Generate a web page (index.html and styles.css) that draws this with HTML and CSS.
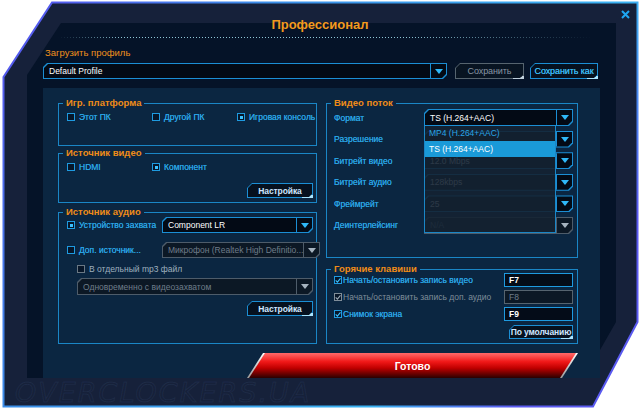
FILE: index.html
```html
<!DOCTYPE html>
<html lang="ru">
<head>
<meta charset="utf-8">
<title>Профессионал</title>
<link rel="stylesheet" href="styles.css">
</head>
<body>
<div class="window">
  <svg class="frame" width="640" height="409" viewBox="0 0 640 409">
    <defs>
      <linearGradient id="edge" gradientUnits="userSpaceOnUse" x1="0" y1="0" x2="640" y2="409">
        <stop offset="0" stop-color="#5a4ff0"/>
        <stop offset="0.3" stop-color="#3a8ee8"/>
        <stop offset="0.7" stop-color="#3ab2f2"/>
        <stop offset="0.86" stop-color="#5a5af0"/>
      </linearGradient>
    </defs>
    <polygon points="52,2.5 637.5,2.5 637.5,322 593,406.5 3.5,406.5 3.5,77" fill="#16213a" stroke="url(#edge)" stroke-width="2"/>
    <polygon points="61,23 616,23 616,322 584,378 27,378 27,75" fill="#051328"/>
  </svg>
  <svg class="close" width="9" height="9" viewBox="0 0 9 9"><path d="M1 1L8 8M8 1L1 8" stroke="#1ea6f2" stroke-width="2"/></svg>

  <header class="titlebar">
    <h1 class="title">Профессионал</h1>
    <div class="dots"></div>
  </header>

  <main class="content">
    <div class="profile-label">Загрузить профиль</div>
    <div class="profile-row">
      <div class="sel cut profile-sel"><div class="sel-in cut"><span class="val">Default Profile</span><span class="arr"></span></div></div>
      <button class="btn gray save"><span class="btn-in">Сохранить</span></button>
      <button class="btn cyan saveas"><span class="btn-in">Сохранить как</span></button>
    </div>

    <section class="panel">
      <div class="cols">
        <div class="col left">
          <fieldset class="group g1">
            <legend>Игр. платформа</legend>
            <div class="opts">
              <label class="opt"><span class="cb"></span>Этот ПК</label>
              <label class="opt"><span class="cb"></span>Другой ПК</label>
              <label class="opt"><span class="cb dot"></span>Игровая консоль</label>
            </div>
          </fieldset>

          <fieldset class="group g2">
            <legend>Источник видео</legend>
            <div class="opts">
              <label class="opt"><span class="cb"></span>HDMI</label>
              <label class="opt"><span class="cb dot"></span>Компонент</label>
            </div>
            <div class="btn-line"><button class="btn light setup"><span class="btn-in">Настройка</span></button></div>
          </fieldset>

          <fieldset class="group g3">
            <legend>Источник аудио</legend>
            <div class="arow">
              <label class="opt"><span class="cb dot"></span>Устройство захвата</label>
              <div class="sel cut"><div class="sel-in cut"><span class="val">Component LR</span><span class="arr"></span></div></div>
            </div>
            <div class="arow second">
              <label class="opt"><span class="cb"></span>Доп. источник...</label>
              <div class="sel cut dis"><div class="sel-in cut"><span class="val">Микрофон (Realtek High Definitio...</span><span class="arr"></span></div></div>
            </div>
            <label class="opt mp3"><span class="cb gray"></span>В отдельный mp3 файл</label>
            <div class="sel cut dis mode"><div class="sel-in cut"><span class="val">Одновременно с видеозахватом</span><span class="arr"></span></div></div>
            <div class="btn-line audio-btn"><button class="btn light setup"><span class="btn-in">Настройка</span></button></div>
          </fieldset>
        </div>

        <div class="col right">
          <fieldset class="group v1">
            <legend>Видео поток</legend>
            <div class="vrows">
              <div class="vrow">
                <span class="lbl">Формат</span>
                <div class="sel-wrap">
                  <div class="sel cut"><div class="sel-in cut"><span class="val">TS (H.264+AAC)</span><span class="arr"></span></div></div>
                  <ul class="menu">
                    <li class="item">MP4 (H.264+AAC)</li>
                    <li class="item on">TS (H.264+AAC)</li>
                  </ul>
                </div>
              </div>
              <div class="vrow"><span class="lbl">Разрешение</span><div class="sel cut"><div class="sel-in cut"><span class="val"></span><span class="arr"></span></div></div></div>
              <div class="vrow"><span class="lbl">Битрейт видео</span><div class="sel cut"><div class="sel-in cut"><span class="val">12.0 Mbps</span><span class="arr"></span></div></div></div>
              <div class="vrow"><span class="lbl">Битрейт аудио</span><div class="sel cut"><div class="sel-in cut"><span class="val">128kbps</span><span class="arr"></span></div></div></div>
              <div class="vrow"><span class="lbl">Фреймрейт</span><div class="sel cut"><div class="sel-in cut"><span class="val">25</span><span class="arr"></span></div></div></div>
              <div class="vrow"><span class="lbl">Деинтерлейсинг</span><div class="sel cut dis"><div class="sel-in cut"><span class="val">N/A</span><span class="arr"></span></div></div></div>
            </div>
          </fieldset>

          <fieldset class="group v2">
            <legend>Горячие клавиши</legend>
            <div class="hk">
              <label class="opt"><span class="cb tick"><svg width="7" height="7" viewBox="0 0 7 7"><path d="M0.8 3.4L2.8 5.4L6.4 1" fill="none" stroke="#3cc0ff" stroke-width="1.3"/></svg></span>Начать/остановить запись видео</label>
              <span class="key">F7</span>
            </div>
            <div class="hk">
              <label class="opt gray"><span class="cb tick gray"><svg width="7" height="7" viewBox="0 0 7 7"><path d="M0.8 3.4L2.8 5.4L6.4 1" fill="none" stroke="#9aa8b4" stroke-width="1.3"/></svg></span>Начать/остановить запись доп. аудио</label>
              <span class="key off">F8</span>
            </div>
            <div class="hk">
              <label class="opt"><span class="cb tick"><svg width="7" height="7" viewBox="0 0 7 7"><path d="M0.8 3.4L2.8 5.4L6.4 1" fill="none" stroke="#3cc0ff" stroke-width="1.3"/></svg></span>Снимок экрана</label>
              <span class="key">F9</span>
            </div>
            <div class="btn-line hk-btn"><button class="btn light defaults"><span class="btn-in">По умолчанию</span></button></div>
          </fieldset>
        </div>
      </div>

      <div class="footer">
        <div class="done-wrap"><button class="done">Готово</button></div>
      </div>
    </section>
  </main>

  <div class="watermark">OVERCLOCKERS.UA</div>
</div>
</body>
</html>
```

FILE: styles.css
```css
* { box-sizing: border-box; margin: 0; padding: 0; }
html, body { width: 640px; height: 409px; overflow: hidden; background: #ffffff; }
body { font-family: "Liberation Sans", Arial, sans-serif; font-size: 8.5px; color: #2aa4e4; }
button { font-family: inherit; border: 0; background: none; cursor: default; }
ul { list-style: none; }

.window { position: relative; width: 640px; height: 409px; }
.frame { position: absolute; left: 0; top: 0; z-index: 0; }
.close { position: absolute; left: 621px; top: 10px; z-index: 2; }
.titlebar, .content, .watermark { position: relative; z-index: 1; }

.titlebar { height: 38px; padding-top: 17px; }
.title { font-size: 13px; line-height: 15px; font-weight: 700; color: #f39a1e; text-align: center; }
.dots {
  margin: 5px 0 0 58px; width: 535px; height: 1px;
  background: repeating-linear-gradient(90deg, #8fc6d6 0 1px, transparent 1px 3px);
  -webkit-mask-image: linear-gradient(90deg, transparent, #000 12%, #000 65%, transparent);
}

.content { margin-left: 43px; width: 557px; }
.profile-label { margin-top: 9px; height: 12px; line-height: 12px; padding-left: 2px; font-size: 9.5px; color: #f0901c; }
.profile-row { margin-top: 4px; height: 16px; display: flex; }

/* bevelled shapes */
.cut { clip-path: polygon(4px 0, 100% 0, 100% calc(100% - 4px), calc(100% - 4px) 100%, 0 100%, 0 4px); }

.sel { height: 16px; padding: 1px; background: #1b8ed4; }
.sel-in { height: 100%; display: flex; align-items: center; background: #030a15; }
.sel .val { flex: 1; padding-left: 5px; color: #ffffff; white-space: nowrap; overflow: hidden; }
.sel .arr { width: 16px; height: 100%; border-left: 1px solid #1b8ed4; display: flex; align-items: center; justify-content: center; }
.sel .arr::before { content: ""; border-left: 4px solid transparent; border-right: 4px solid transparent; border-top: 5px solid #2fb8f8; }
.sel.dis { background: #4e5c6a; }
.sel.dis .sel-in { background: #0c1825; }
.sel.dis .val { color: #6f7d8a; }
.sel.dis .arr { border-left-color: #4e5c6a; }
.sel.dis .arr::before { border-top-color: #a6b3bf; }

.profile-sel { width: 404px; margin-right: 8px; }

.btn {
  display: block; height: 16px; padding: 1px;
  background: linear-gradient(to top left, #a8e4ff 3px, #1b8ed4 3px);
  clip-path: polygon(5px 0, 100% 0, 100% 100%, 0 100%, 0 5px);
}
.btn-in {
  display: flex; align-items: center; justify-content: center; height: 100%;
  background: #06111f; color: #3ab8f2; font-size: 8.5px; font-weight: 700; white-space: nowrap; letter-spacing: -0.1px;
  clip-path: polygon(4px 0, 100% 0, 100% calc(100% - 3px), calc(100% - 3px) 100%, 0 100%, 0 4px);
}
.btn.gray { background: linear-gradient(to top left, #c0d0dc 3px, #56646f 3px); }
.btn.gray .btn-in { color: #8795a2; background: #081422; font-weight: 400; font-size: 9px; }
.btn.cyan .btn-in { font-weight: 400; font-size: 9px; text-shadow: 0 0 0.6px #3ab8f2; }
.btn.light .btn-in { color: #cfe6ff; background: #06111f; }
.save { width: 69px; margin-right: 6px; }
.saveas { width: 68px; }

/* panel */
.panel { margin-top: 9px; height: 290px; background: #0b2641; padding: 10px 22px 0 15px; }
.cols { display: flex; gap: 9px; }
.col { display: flex; flex-direction: column; }
.col.left { width: 259px; }
.col.right { width: 252px; }

.group { border: 1px solid #1a86c6; min-width: 0; padding: 0 3px 0 8px; }
.group legend { margin-left: -4px; padding: 0 3px; font-size: 9.5px; line-height: 10px; font-weight: 700; color: #f08c18; }
.g1 { height: 48px; }
.g2 { height: 55px; margin-top: 2px; }
.g3 { height: 137px; margin-top: 4px; }
.v1 { height: 160px; padding: 0 4px 0 7px; }
.v1 legend, .v2 legend { margin-left: -3px; }
.v2 { height: 80px; margin-top: 6px; padding: 0 4px 0 7px; }

.opts { display: flex; padding-top: 3px; height: 15px; }
.opt { display: flex; align-items: center; height: 12px; white-space: nowrap; text-shadow: 0 0 0.6px #2aa4e4; }
.opts .opt { width: 85px; flex: none; }
.opts .opt:last-child { width: auto; }
.cb { width: 8px; height: 8px; border: 1px solid #1e9ae0; background: #071629; margin-right: 4px; flex: none; display: flex; align-items: center; justify-content: center; }
.cb.dot::after { content: ""; width: 3px; height: 3px; background: #3cc0ff; }
.cb.gray { border-color: #6a7884; }
.opt.gray { color: #7f8d99; text-shadow: none; }
.cb.tick { margin-right: 1px; background: #071629; }
.cb.tick.gray { border-color: #7f8d99; }

.btn-line { display: flex; justify-content: flex-end; }
.g2 .btn-line { margin-top: 10px; }
.setup { width: 66px; height: 15px; }

.arow { display: grid; grid-template-columns: 95px 1fr; align-items: center; height: 16px; }
.arow.second { margin-top: 9px; }
.mp3 { margin: 5px 0 0 10px; color: #9fb0be; text-shadow: none; }
.mode { margin: 3px 0 0 10px; height: 17px; }
.audio-btn { margin-top: 6px; }

.vrows { display: flex; flex-direction: column; gap: 4.6px; padding-top: 1px; }
.vrow { display: grid; grid-template-columns: 90px 149px; align-items: center; height: 17px; }
.vrow .sel { height: 17px; }
.lbl { text-shadow: 0 0 0.6px #2aa4e4; }
.sel-wrap { position: relative; }
.menu {
  position: absolute; left: 0; top: 17px; width: 132px; height: 107px; z-index: 3;
  border: 1px solid #1a86c6; border-top: 0; background: rgba(20, 34, 50, 0.9);
}
.item { height: 15px; line-height: 15px; padding-left: 4px; color: #2aa4e4; }
.item.on { height: 16px; line-height: 16px; background: #1a9ad8; color: #ffffff; }

.hk { display: flex; justify-content: space-between; align-items: center; height: 14px; margin-top: 3px; }
.hk:first-of-type { margin-top: -1px; }
.key { width: 69px; height: 14px; border: 1px solid #1e9ae0; background: #040c18; color: #ffffff; font-weight: 700; padding-left: 4px; line-height: 12px; }
.key.off { border-color: #56646f; background: #0c1825; color: #6f7d8a; font-weight: 400; }
.hk-btn { margin-top: 4px; }
.defaults { width: 64px; height: 14px; }

.footer { margin: 9px 0 0 189px; }
.done-wrap {
  width: 331px; height: 25px; padding: 0 2px;
  background: linear-gradient(#ffffff, #9a9a9a);
  clip-path: polygon(16px 0, 100% 0, calc(100% - 16px) 100%, 0 100%);
}
.done {
  display: block; width: 100%; height: 25px; color: #ffffff; font-size: 10.5px; font-weight: 700;
  background: linear-gradient(#ff6a6a 0%, #f01818 35%, #c00000 60%, #500000 90%, #2a0000 100%);
  clip-path: polygon(16px 0, 100% 0, calc(100% - 16px) 100%, 0 100%);
}

.watermark {
  height: 29px; overflow: hidden; padding-left: 15px;
  font-family: "DejaVu Sans", sans-serif; font-size: 27px; line-height: 30px; font-style: italic; letter-spacing: 2px;
  color: rgba(255, 255, 255, 0.01); -webkit-text-stroke: 1px rgba(110, 140, 190, 0.1);
}
```
